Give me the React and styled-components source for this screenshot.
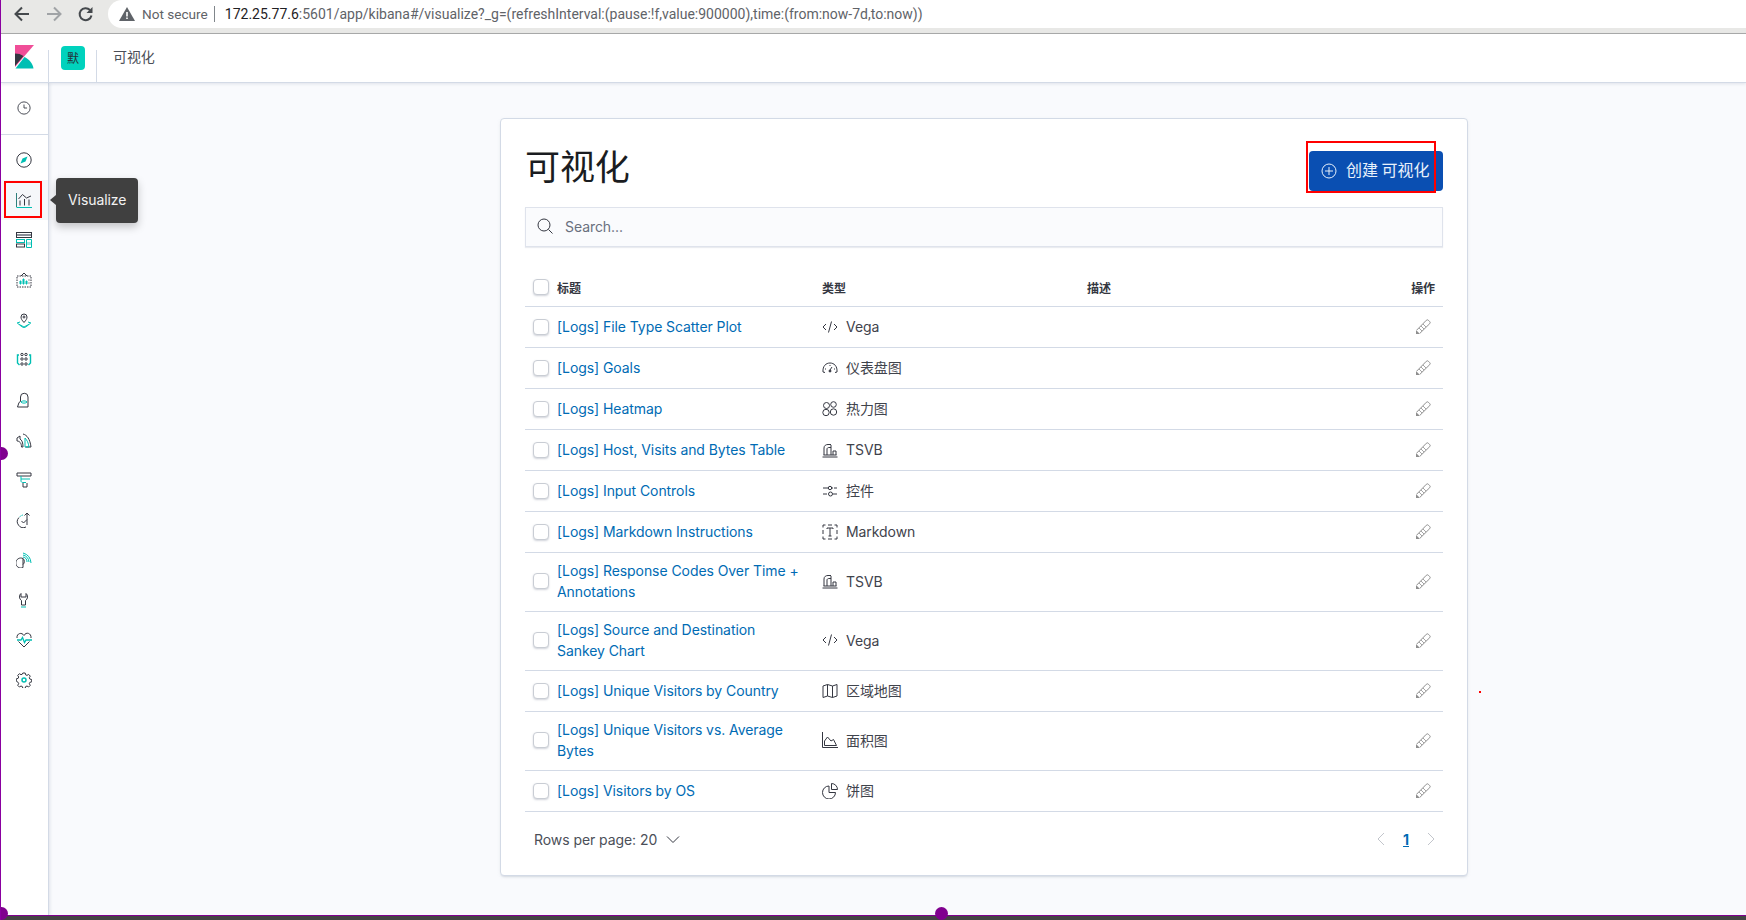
import React from "react";
import styled, { createGlobalStyle } from "styled-components";

const Global = createGlobalStyle`
  html, body { margin: 0; padding: 0; width: 1746px; height: 920px; overflow: hidden; background: #fff; }
  * { box-sizing: border-box; }
  body { font-family: Inter, "Noto Sans CJK SC", sans-serif; color: #343741; font-size: 14px; letter-spacing: -0.07px; }
`;

const Frame = styled.div`
  position: relative; width: 1746px; height: 920px; display: flex; flex-direction: column;
  border-left: 1px solid #8a00a0; overflow: hidden;
`;
const BrowserBar = styled.div`
  height: 34px; flex: none; display: flex; align-items: flex-start; background: #e8e8e6;
  border-bottom: 1px solid #a9a9a9; padding-left: 13px;
`;
const NavBtn = styled.button`
  width: 32px; height: 28px; border: 0; background: none; padding: 0; display: flex;
  align-items: center; justify-content: flex-start; color: ${p => p.$off ? "#a0a3a6" : "#45494d"};
`;
const AddressPill = styled.div`
  margin-left: -2px; flex: 1; height: 28px; background: #fff; border-radius: 14px 0 0 14px;
  display: flex; align-items: center; padding-left: 11px; font-family: Roboto, sans-serif; font-size: 14px; letter-spacing: 0;
`;
const Insecure = styled.span`
  color: #5f6368; margin-left: 7px; padding-right: 6px; margin-right: 10px; border-right: 1px solid #80868b; line-height: 16px; font-size: 13.6px;
`;
const Url = styled.span`color: #1f2124; b { font-weight: 400; } i { font-style: normal; color: #5f6368; }`;
const TopBar = styled.header`
  height: 49px; flex: none; display: flex; background: #fff; border-bottom: 1px solid #d3dae6;
  box-shadow: 0 1px 3px rgba(152,162,179,.25); position: relative; z-index: 2;
`;
const LogoCell = styled.div`width: 47px; display: flex; padding: 11px 0 0 14px;`;
const SpaceCell = styled.div`
  width: 49px; margin-top: 16px; border-left: 1px solid #d3dae6; border-right: 1px solid #d3dae6; position: relative;
`;
const Avatar = styled.div`
  position: absolute; left: 12px; top: -4px; width: 24px; height: 24px; border-radius: 4px;
  background: #00d2bd; color: #24343a; font-size: 12px; display: flex; align-items: center; justify-content: center; padding-bottom: 2px;
`;
const Crumb = styled.div`padding: 12px 0 0 16px; font-size: 14px; line-height: 21px; color: #4b4f58;`;
const Body = styled.div`flex: 1; display: flex; min-height: 0;`;
const Side = styled.nav`
  width: 48px; flex: none; background: #fff; border-right: 1px solid #d3dae6;
  box-shadow: 1px 0 3px rgba(152,162,179,.25); display: flex; flex-direction: column; position: relative; z-index: 1;
`;
const RecentBlock = styled.div`
  height: 52px; border-bottom: 1px solid #d3dae6; padding-top: 5px; margin-bottom: 5px;
`;
const SideItem = styled.div`
  height: 40px; display: flex; align-items: center; justify-content: center; padding-right: 2px; background: ${p => p.$on ? "#f5f7fa" : "transparent"};
`;
const Main = styled.main`flex: 1; background: #f9fafd; padding: 35px 0 0 451px;`;
const Panel = styled.section`
  width: 968px; height: 758px; background: #fff; border: 1px solid #d3dae6; border-radius: 4px; padding: 24px;
  box-shadow: 0 2px 2px -1px rgba(152,162,179,.3), 0 1px 5px -2px rgba(152,162,179,.3);
`;
const TitleRow = styled.div`height: 48px; display: flex; justify-content: space-between; align-items: flex-end; margin-bottom: 16px;`;
const H1 = styled.h1`margin: -4px 0 0; align-self: center; font-size: 35px; line-height: 48px; font-weight: 400; color: #1a1c21; font-family: "Noto Sans CJK SC", sans-serif;`;
const Create = styled.button`
  width: 134px; height: 40px; border: 0; border-radius: 4px; background: #0a4fb2; color: #e8f1fb; display: flex; align-items: center;
  gap: 9px; padding: 0 0 0 12px; font-size: 16px; font-family: "Noto Sans CJK SC", sans-serif; white-space: nowrap;
`;
const CreateLabel = styled.span`margin-top: -5px;`;
const Search = styled.div`
  height: 40px; background: #fafbfd; border: 1px solid #dfe3ec; box-shadow: 0 1px 1px rgba(152,162,179,.2);
  display: flex; align-items: center; gap: 12px; padding: 0 0 2px 11px; color: #69707d; font-size: 14px;
`;
const Grid = styled.div`
  display: grid; grid-template-columns: 32px 265px 265px 1fr 72px; align-items: center;
  border-bottom: 1px solid #d3dae6; min-height: ${p => p.$head ? "40px" : "41px"}; padding: ${p => p.$tall ? "7px 0 9px" : "0 0 1px"};
`;
const THead = styled(Grid)`margin-top: 20px; font-size: 12px; font-weight: 700; color: #343741; padding-top: 2px;`;
const Check = styled.span`
  display: block; width: 16px; height: 16px; margin-left: 8px; background: #fff; border: 1px solid #c9cdd4; border-radius: 4px;
  box-shadow: 0 1px 2px rgba(120,130,150,.35);
`;
const Title = styled.a`color: #006bb4; line-height: 21px; font-size: 14px; display: block; padding-right: 16px;`;
const TypeCell = styled.div`display: flex; align-items: center; gap: 8px; color: #3f434c; line-height: 21px;`;
const Act = styled.div`display: flex; justify-content: flex-end; padding-right: 12px; color: #8e8e8e;`;
const ActHead = styled.div`text-align: right; padding-right: 8px;`;
const Pager = styled.div`height: 56px; display: flex; align-items: center; justify-content: space-between; padding: 0 8px 2px 9px; color: #4b4f58;`;
const Rows = styled.div`display: flex; align-items: center; gap: 9px;`;
const Pages = styled.div`display: flex; align-items: center; gap: 18px; color: #c2c5cb;`;
const PageNum = styled.a`color: #006bb4; font-weight: 700; text-decoration: underline; font-size: 14px;`;
const Tip = styled.div`
  position: absolute; left: 55px; top: 178px; width: 82px; height: 45px; background: #404040; color: #f2f2f2; border-radius: 4px;
  display: flex; align-items: center; padding: 0 0 2px 12px; font-size: 14px; box-shadow: 0 4px 8px rgba(0,0,0,.22); z-index: 5;
  &::before { content: ""; position: absolute; left: -6px; top: 17px; border: 5px solid transparent; border-left: 0; border-right: 6px solid #404040; }
`;
const RedBox = styled.div`
  position: absolute; left: ${p => p.$x}px; top: ${p => p.$y}px; width: ${p => p.$w}px; height: ${p => p.$h}px;
  border: 2px solid #f00; z-index: 6; pointer-events: none;
`;
const Dot = styled.div`
  position: absolute; left: ${p => p.$x - 6}px; top: ${p => p.$y - 6}px; width: 13px; height: 13px; border-radius: 50%; background: #80008f; z-index: 7;
`;
const Speck = styled.div`position: absolute; left: 1478px; top: 691px; width: 2px; height: 2px; background: #f00; z-index: 6;`;
const BottomBar = styled.div`height: 5px; flex: none; background: #444; border-top: 1px solid #80008f; position: relative; z-index: 3;`;

const T = "#00bfb3", D = "#343741";
const Ico = ({ children, s = 16 }) => (
  <svg width={s} height={s} viewBox="0 0 16 16" fill="none" stroke={D} strokeWidth="1">{children}</svg>
);

const Logo = () => (
  <svg width="19" height="24" viewBox="0 0 19 24">
    <path d="M0 0h19L0 22z" fill="#f04e98" />
    <path d="M0 8.500v12.500L8.500 11C6 9.300 3.200 8.500 0 8.500z" fill="#343741" />
    <path d="M9.500 12L0.500 23.500h18c-.6-4.600-3.900-8.900-9-11.500z" fill="#00bfb3" />
  </svg>
);

const SideIcons = [
  <Ico key="d"><circle cx="8" cy="8" r="7.200" /><path d="M4.500 11.500L6.500 6.500 11.500 4.500 9.500 9.500z" fill={T} stroke="none" /></Ico>,
  <Ico key="v"><path d="M.5 1v14" stroke="#2e7f7c" /><path d="M.5 15.500H16" stroke={T} /><path d="M2.500 7L6.500 2.500l4 3.500 4.500-2" /><path d="M4 8.500v5M8.500 7v6.500M13 7.500v6" /></Ico>,
  <Ico key="b"><rect x=".5" y=".5" width="15" height="5" /><path d="M1 2h14v2H1z" fill="#8a8f98" stroke="none" /><rect x=".5" y="7.500" width="8" height="3" stroke={T} /><rect x=".5" y="12" width="8" height="3" /><path d="M10.500 7.500h5v8h-5z" stroke={T} /><path d="M11 10h4v3h-4z" fill="#a5e6e1" stroke="none" /></Ico>,
  <Ico key="c"><path d="M1 4h14v11H1z" strokeDasharray="1.500 1" /><path d="M5 4l3-3 3 3" /><path d="M4 12V9h1v3zM7 12V7h1v5zM10 12V9h1v3z" fill={T} stroke={T} /><path d="M12.500 8h1M12.500 11h1" /></Ico>,
  <Ico key="m"><path d="M8 10.500C5.800 8 5 6.800 5 5a3 3 0 0 1 6 0c0 1.800-.8 3-3 5.500z" /><circle cx="8" cy="5" r="1" /><path d="M1 11l3-1M15 11l-3-1M1.500 11.500L8 15l6.500-3.500M3.500 13L8 16l4.500-3" stroke={T} /></Ico>,
  <Ico key="ml"><circle cx="6" cy="2.500" r="1.200" /><circle cx="10" cy="2.500" r="1.200" /><circle cx="6" cy="7" r="1.200" /><circle cx="10" cy="7" r="1.200" /><circle cx="6" cy="12" r="1.200" /><circle cx="10" cy="12" r="1.200" /><path d="M3 3H1.500v8l2 2M13 3h1.500v8l-2 2" stroke={T} strokeWidth="1.400" /></Ico>,
  <Ico key="i"><path d="M1.500 15l1.500-4.500 1.500-1V5a3.700 3.700 0 0 1 7.500 0v10z" /><path d="M5 10c1-1.500 5-1.500 6 0-1 1.500-5 1.500-6 0z" stroke={T} /></Ico>,
  <Ico key="l"><path d="M1 6l3-2v3c2 1 3 4 3 8H5.500C5.500 11 3.500 9 1 9z" /><path d="M7 2c4 1 7 5 8 13H9.500" /><path d="M9 6c2 2 3.500 5 4 9H9z" stroke={T} /></Ico>,
  <Ico key="a"><path d="M1 1h14v3H1z" /><path d="M5 4v3h9" stroke={T} /><path d="M5 7v2c0 1 1 1.500 2 1.500h3" stroke={T} /><path d="M7 11v4h4v-4" /></Ico>,
  <Ico key="u"><path d="M10 15a6 6 0 0 1-7-9.500" /><path d="M3.500 5A6 6 0 0 1 7 3" stroke={T} strokeDasharray="1.500 1" /><path d="M5.500 9l2 2L11 7.500" /><path d="M11 13V1M8.500 3.500L11 1l2.500 2.500" /></Ico>,
  <Ico key="ap"><path d="M7 6.500a5 5 0 1 0 0 9z" /><path d="M7 6.500a4 4 0 0 1 0 6" /><path d="M7 3a8 8 0 0 1 6 7M7 1a11 11 0 0 1 8 10M7 5a5 5 0 0 1 4 5" stroke={T} /></Ico>,
  <Ico key="t"><path d="M5 1.500C3 3 3 7 5.500 8.500V13h4V8.500C12 7 12 3 10 1.500V5H5z" /><path d="M5 15h5" stroke={T} /></Ico>,
  <Ico key="h"><path d="M1 6c-.5-5 5-6 7-2.500C10-.5 15.500 1 15 6" /><path d="M1 8h4l1.500-2.500 2 5L10 8h6" stroke={T} strokeWidth="1.300" /><path d="M2.500 9.500L8 15l5.500-5.500" /></Ico>,
  <Ico key="s"><path d="M6.800 1h2.400l.4 1.800 1.400.6 1.600-1 1.700 1.700-1 1.600.6 1.400 1.800.4v2.400l-1.800.4-.6 1.400 1 1.600-1.700 1.700-1.600-1-1.400.6-.4 1.800H6.800l-.4-1.800-1.400-.6-1.600 1-1.700-1.700 1-1.600-.6-1.400L.3 9.200V6.800l1.800-.4.6-1.400-1-1.600 1.700-1.700 1.600 1 1.400-.6z" /><circle cx="8" cy="8" r="2" stroke={T} strokeWidth="1.500" /></Ico>,
];

const V = { code: <Ico><path d="M4 5L1 8l3 3M12 5l3 3-3 3M9.500 2.500L6.500 13.500" /></Ico>,
  gauge: <Ico><path d="M3 12.500L1 12C.5 6 4 3 8 3s7.500 3 7 9l-2 .5" /><path d="M8 10l2-3M3 9h1M12 9h1M8 5v1" /><circle cx="8" cy="11" r="1" fill={D} /></Ico>,
  heat: <Ico><circle cx="4.500" cy="4.500" r="3" /><circle cx="11.500" cy="3.500" r="2.800" /><circle cx="4" cy="11.500" r="3.200" /><circle cx="11.500" cy="11" r="3.200" /></Ico>,
  tsvb: <Ico><path d="M.5 15h15M1.500 13h13" /><path d="M2 13V6c0-2.500 2-3.500 4-3.500h3M5 13V7c0-1 1-1.500 2-1.500h2M9 3v10M11 13V9h3v4" /></Ico>,
  ctl: <Ico><path d="M1 5h5M9.500 5H11M1 11h4M11 11h4M12 5h3" /><circle cx="8" cy="5" r="1.700" /><circle cx="8.500" cy="11" r="2" /></Ico>,
  md: <Ico><path d="M1 3.500V1h2.500M12.500 1H15v2.500M15 12.500V15h-2.500M3.500 15H1v-2.500M1 6v4M15 6v4M6 1h4M6 15h4" /><path d="M5 5V4h6v1M8 4v8M6.500 12h3" /></Ico>,
  map: <Ico><path d="M1 3l4.500-1.500 5 1.500L15 1.500V13l-4.500 1.500-5-1.500L1 14.500zM5.500 1.500V13M10.500 3v11.500" /></Ico>,
  area: <Ico><path d="M.5 0v15.500H16" /><path d="M2.500 13.500V9L5.500 5l3.500 4 2.500-1.500 3 6z" /></Ico>,
  pie: <Ico><path d="M7 3a6.500 6.500 0 1 0 6.500 6.500H7z" /><path d="M9.500.5a6 6 0 0 1 6 6h-6z" /></Ico> };

const Pencil = () => (
  <svg width="15" height="15" viewBox="0 0 15 15" fill="none" stroke="currentColor">
    <path d="M.8 11l9.500-9.700a1.500 1.500 0 0 1 2.100 0l1.300 1.300a1.500 1.500 0 0 1 0 2.100L4 14.200" />
    <path d="M3 9l3 3M5 7l3 3M7 5l3 3" strokeWidth=".8" />
    <path d="M0 15v-4l4 4z" fill="currentColor" stroke="none" />
  </svg>
);

const rows = [
  ["[Logs] File Type Scatter Plot", "code", "Vega"],
  ["[Logs] Goals", "gauge", "仪表盘图"],
  ["[Logs] Heatmap", "heat", "热力图"],
  ["[Logs] Host, Visits and Bytes Table", "tsvb", "TSVB"],
  ["[Logs] Input Controls", "ctl", "控件"],
  ["[Logs] Markdown Instructions", "md", "Markdown"],
  ["[Logs] Response Codes Over Time + Annotations", "tsvb", "TSVB", 1],
  ["[Logs] Source and Destination Sankey Chart", "code", "Vega", 1],
  ["[Logs] Unique Visitors by Country", "map", "区域地图"],
  ["[Logs] Unique Visitors vs. Average Bytes", "area", "面积图", 1],
  ["[Logs] Visitors by OS", "pie", "饼图"],
];

export default function App() {
  return (
    <Frame>
      <Global />
      <BrowserBar>
        <NavBtn><svg width="16" height="16" viewBox="0 0 16 16" fill="none" stroke="currentColor" strokeWidth="2"><path d="M15 8H2M8 1.500L1.500 8 8 14.500" /></svg></NavBtn>
        <NavBtn $off><svg width="16" height="16" viewBox="0 0 16 16" fill="none" stroke="currentColor" strokeWidth="2"><path d="M1 8h13M8 1.500L14.500 8 8 14.500" /></svg></NavBtn>
        <NavBtn><svg width="16" height="16" viewBox="0 0 16 16" fill="none" stroke="currentColor" strokeWidth="2"><path d="M13.500 9.500A6 6 0 1 1 12 4" /><path d="M14.500 1v6h-6z" fill="currentColor" stroke="none" /></svg></NavBtn>
        <AddressPill>
          <svg width="16" height="14" viewBox="0 0 16 14"><path d="M8 0l8 14H0z" fill="#5f6368" /><path d="M7.200 5h1.600v4.500H7.200zM7.200 10.500h1.600V12H7.200z" fill="#fff" /></svg>
          <Insecure>Not secure</Insecure>
          <Url><b>172.25.77.6</b><i>:5601/app/kibana#/visualize?_g=(refreshInterval:(pause:!f,value:900000),time:(from:now-7d,to:now))</i></Url>
        </AddressPill>
      </BrowserBar>
      <TopBar>
        <LogoCell><Logo /></LogoCell>
        <SpaceCell><Avatar>默</Avatar></SpaceCell>
        <Crumb>可视化</Crumb>
      </TopBar>
      <Body>
        <Side>
          <RecentBlock>
            <SideItem><Ico s={14}><circle cx="8" cy="8" r="7" /><path d="M8 4v4h3.500" /></Ico></SideItem>
          </RecentBlock>
          {SideIcons.map((ic, i) => <SideItem key={i} $on={i === 1}>{ic}</SideItem>)}
        </Side>
        <Main>
          <Panel>
            <TitleRow>
              <H1>可视化</H1>
              <Create>
                <svg width="16" height="16" viewBox="0 0 16 16" fill="none" stroke="currentColor"><circle cx="8" cy="8" r="7" /><path d="M8 4v8M4 8h8" /></svg>
                <CreateLabel>创建 可视化</CreateLabel>
              </Create>
            </TitleRow>
            <Search>
              <svg width="16" height="16" viewBox="0 0 16 16" fill="none" stroke="#343741"><circle cx="7" cy="7" r="6" /><path d="M11.500 11.500L15.500 15.500" /></svg>
              Search...
            </Search>
            <THead $head>
              <Check />
              <span>标题</span>
              <span>类型</span>
              <span>描述</span>
              <ActHead>操作</ActHead>
            </THead>
            {rows.map(([t, ic, ty, tall]) => (
              <Grid key={t} $tall={tall}>
                <Check />
                <Title>{t}</Title>
                <TypeCell>{V[ic]}{ty}</TypeCell>
                <span />
                <Act><Pencil /></Act>
              </Grid>
            ))}
            <Pager>
              <Rows>
                Rows per page: 20
                <svg width="14" height="14" viewBox="0 0 14 14" fill="none" stroke="#343741"><path d="M1 4.500l6 6 6-6" /></svg>
              </Rows>
              <Pages>
                <svg width="8" height="14" viewBox="0 0 8 14" fill="none" stroke="currentColor"><path d="M7 1L1 7l6 6" /></svg>
                <PageNum>1</PageNum>
                <svg width="8" height="14" viewBox="0 0 8 14" fill="none" stroke="currentColor"><path d="M1 1l6 6-6 6" /></svg>
              </Pages>
            </Pager>
          </Panel>
        </Main>
      </Body>
      <BottomBar />
      <Tip>Visualize</Tip>
      <RedBox $x={3} $y={181} $w={38} $h={37} />
      <RedBox $x={1305} $y={141} $w={130} $h={52} />
      <Speck />
      <Dot $x={0} $y={453} />
      <Dot $x={0} $y={913} />
      <Dot $x={940} $y={913} />
    </Frame>
  );
}
